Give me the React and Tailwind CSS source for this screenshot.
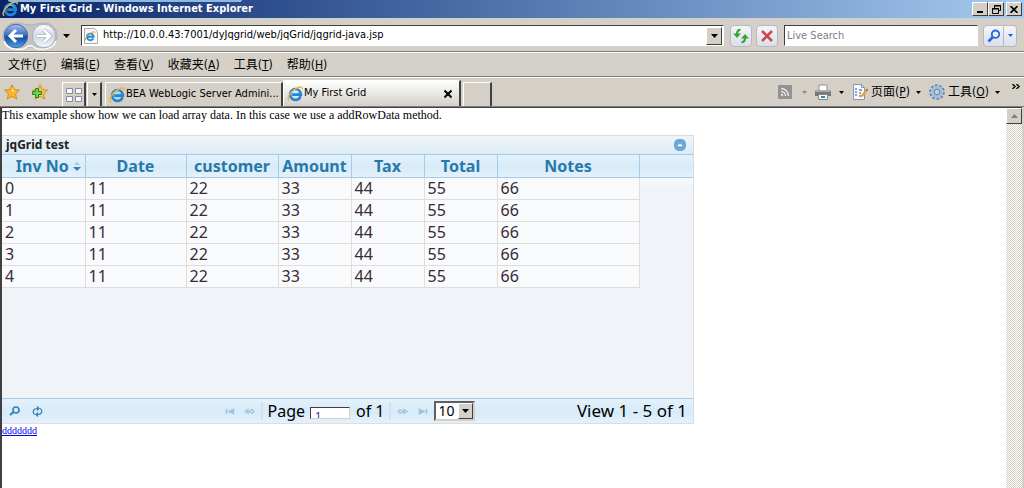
import { useState } from "react";

const columns = [
  { name: "Inv No", width: "w-[83px]", sortable: true },
  { name: "Date", width: "w-[101px]" },
  { name: "customer", width: "w-[92px]" },
  { name: "Amount", width: "w-[73px]" },
  { name: "Tax", width: "w-[73px]" },
  { name: "Total", width: "w-[73px]" },
  { name: "Notes", width: "w-[142px]" },
];

const rows = [0, 1, 2, 3, 4].map((id) => [id, 11, 22, 33, 44, 55, 66]);

const menus = [
  ["文件", "F"],
  ["编辑", "E"],
  ["查看", "V"],
  ["收藏夹", "A"],
  ["工具", "T"],
  ["帮助", "H"],
];

const raised =
  "border border-t-white border-l-white border-r-[#404040] border-b-[#404040] bg-[#d4d0c8]";

function IeLogo({ className }) {
  return (
    <svg viewBox="0 0 16 16" className={className} aria-hidden="true">
      <path
        d="M13.6 10.2a5.4 5.4 0 1 1 .2-2.6v1H5.2"
        fill="none"
        stroke="#1f86d8"
        strokeWidth="2.7"
      />
      <path d="M5 6.8a3.5 3.5 0 0 1 6.8 0" fill="none" stroke="#7fd0fa" strokeWidth="1" />
      <path
        d="M2.2 14.6C-.6 13 2.5 7 7.4 3.5 11.5.6 15.6-.2 15.3 3.2"
        fill="none"
        stroke="#f2b632"
        strokeWidth="1.4"
      />
    </svg>
  );
}

function Caret({ className = "text-black" }) {
  return (
    <svg viewBox="0 0 7 4" className={`h-1 w-[7px] shrink-0 ${className}`} aria-hidden="true">
      <path d="M0 0h7L3.5 4z" fill="currentColor" />
    </svg>
  );
}

function SmallCaret({ className = "" }) {
  return (
    <svg viewBox="0 0 5 3" className={`h-[3px] w-[5px] shrink-0 ${className}`} aria-hidden="true">
      <path d="M0 0h5L2.5 3z" fill="currentColor" />
    </svg>
  );
}

function Hotkey({ label, letter }) {
  return (
    <>
      {label}(<span className="underline">{letter}</span>)
    </>
  );
}

function TitleBar() {
  return (
    <header className="flex h-[18px] items-center justify-between bg-linear-to-r from-[#0a246a] to-[#a6caf0] px-[2px]">
      <div className="absolute top-0 left-2 h-[2px] w-[234px] rounded-b-sm bg-[#8fb8dc]" />
      <h1 className="flex items-center gap-[2px] font-['DejaVu_Sans_Condensed','DejaVu_Sans',sans-serif] text-[11px] leading-[14px] font-bold text-white">
        <IeLogo className="size-4" />
        My First Grid - Windows Internet Explorer
      </h1>
      <div className="flex">
        <button aria-label="Minimize" className={`flex h-[14px] w-4 items-end p-[2px] ${raised}`}>
          <svg viewBox="0 0 10 8" className="h-2 w-[10px]">
            <path d="M2 6h6v2H2z" />
          </svg>
        </button>
        <button aria-label="Restore" className={`grid h-[14px] w-4 place-items-center ${raised}`}>
          <svg viewBox="0 0 9 9" className="size-[9px]" fill="none" stroke="#000">
            <path d="M2.5 3V.5h6v5H7M2 1h7M.5 3.5h6v5h-6zM0 4h7" />
          </svg>
        </button>
        <button aria-label="Close" className={`ml-[2px] grid h-[14px] w-4 place-items-center ${raised}`}>
          <svg viewBox="0 0 8 7" className="h-[7px] w-2" stroke="#000" strokeWidth="1.6">
            <path d="M.5 0l7 7M7.5 0l-7 7" />
          </svg>
        </button>
      </div>
    </header>
  );
}

function NavButtons() {
  return (
    <svg viewBox="0 0 56 28" className="h-7 w-14" role="img" aria-label="Back and forward">
      <defs>
        <linearGradient id="back" x1="0" y1="0" x2="0" y2="1">
          <stop offset="0" stopColor="#a9c3ee" />
          <stop offset=".45" stopColor="#3f70c4" />
          <stop offset=".55" stopColor="#164a9e" />
          <stop offset="1" stopColor="#4fa0ee" />
        </linearGradient>
        <linearGradient id="forward" x1="0" y1="0" x2="0" y2="1">
          <stop offset="0" stopColor="#fff" />
          <stop offset=".5" stopColor="#ccd6e6" />
          <stop offset="1" stopColor="#f4f8fd" />
        </linearGradient>
      </defs>
      <path
        d="M14 .8C20 .8 22 3 28 3S36 .8 42 .8a13 13 0 0 1 0 26.4C36 27.2 34 25 28 25s-8 2.2-14 2.2A13 13 0 0 1 14 .8z"
        fill="#c4c4c4"
        stroke="#b4b2ae"
      />
      <path d="M2 19c3 10 19 10 24 5h4c6 5 20 5 24-5" fill="none" stroke="#fff" strokeWidth="1.5" />
      <circle cx="14" cy="14" r="11.7" fill="url(#back)" stroke="#4267a5" />
      <circle cx="42" cy="14" r="11.7" fill="url(#forward)" stroke="#a7adb8" />
      <path d="M21 14H9M14 8l-6 6 6 6" fill="none" stroke="#fff" strokeWidth="3" />
      <path d="M35 14h12M42 8l6 6-6 6" fill="none" stroke="#a9b1bd" strokeWidth="4" />
      <path d="M35 14h12M42 8l6 6-6 6" fill="none" stroke="#fff" strokeWidth="2.6" />
    </svg>
  );
}

function AddressBar() {
  const [url, setUrl] = useState("http://10.0.0.43:7001/dyJqgrid/web/jqGrid/jqgrid-java.jsp");
  const toolButton =
    "grid h-[22px] place-items-center rounded-sm border border-[#b5b8c0] bg-linear-to-b from-[#f5f5f8] to-[#dcdfea]";
  const field = "border border-t-[#404040] border-l-[#404040] border-r-white border-b-white bg-white";

  return (
    <div className="flex h-[34px] items-center border-b border-[#808080] pt-[2px] pr-[7px] pl-[2px]">
      <NavButtons />
      <button aria-label="Recent pages" className="ml-1 p-[1px]">
        <Caret />
      </button>
      <div className={`ml-[10px] flex h-[21px] min-w-0 flex-1 items-center pr-[1px] ${field}`}>
        <svg viewBox="0 0 16 16" className="mx-[1px] size-4 shrink-0">
          <path d="M1.5.5h10l3 3v12h-13z" fill="#f8f8f8" stroke="#aaa" />
          <path d="M10.3 10.3a3.3 3.3 0 1 1 .2-2.2v.6H4.5" fill="none" stroke="#1f86d8" strokeWidth="1.9" />
          <path d="M3 12.5c-2-1 1-5 4-7s5.5-2.5 5-.3" fill="none" stroke="#f2a622" />
        </svg>
        <input
          aria-label="Address"
          value={url}
          onChange={(e) => setUrl(e.target.value)}
          className="ml-[3px] min-w-0 flex-1 font-['DejaVu_Sans_Condensed','DejaVu_Sans',sans-serif] text-[11px] outline-none"
        />
        <button aria-label="Show addresses" className={`grid h-[18px] w-4 place-items-center ${raised}`}>
          <Caret />
        </button>
      </div>
      <button aria-label="Refresh" className={`ml-[6px] w-[22px] ${toolButton}`}>
        <svg viewBox="0 0 16 16" className="size-4" fill="none" stroke="#36a336" strokeWidth="2.2">
          <path d="M7.5 2C4.500 1.500 4 4 4 7M8.500 14c3 .5 3.500-2 3.500-5" />
          <path d="M0 5.500h8L4 10zM8 10.500h8L12 6z" fill="#36a336" stroke="none" />
        </svg>
      </button>
      <button aria-label="Stop" className={`ml-1 w-[22px] ${toolButton}`}>
        <svg viewBox="0 0 14 14" className="size-[14px]" stroke="#c84848" strokeWidth="2.5">
          <path d="M2 2l10 10M12 2L2 12" />
        </svg>
      </button>
      <input
        aria-label="Search"
        placeholder="Live Search"
        className={`ml-[6px] h-[21px] w-[194px] pl-[2px] font-['DejaVu_Sans_Condensed','DejaVu_Sans',sans-serif] text-[11px] outline-none placeholder:text-[#808080] ${field}`}
      />
      <button aria-label="Start search" className={`ml-[5px] w-[21px] rounded-r-none ${toolButton}`}>
        <svg viewBox="0 0 14 14" className="size-[14px]" fill="none" stroke="#2a66dd">
          <circle cx="8.5" cy="5.2" r="3.7" strokeWidth="1.9" fill="#e8f2ff" />
          <path d="M5.8 8L1.5 12.5" strokeWidth="2.6" />
        </svg>
      </button>
      <button aria-label="Search options" className={`w-[13px] rounded-l-none border-l-0 ${toolButton}`}>
        <SmallCaret className="text-[#0a5ef0]" />
      </button>
    </div>
  );
}

function MenuBar() {
  return (
    <nav className="flex h-[25px] items-center gap-[14px] border-t border-b border-t-white border-b-[#808080] pl-2 text-[12px]">
      {menus.map(([label, letter]) => (
        <button key={letter}>
          <Hotkey label={label} letter={letter} />
        </button>
      ))}
    </nav>
  );
}

const starPath = "M8 .8l2.2 4.8 5.2.6-3.8 3.6 1 5.2L8 12.4 3.4 15l1-5.2L.6 6.2l5.2-.6z";

function TabBar() {
  const tab = "flex items-center border-t border-l border-r-2 border-t-white border-l-white border-r-[#404040]";

  return (
    <div className="flex h-[30px] items-end justify-between border-t border-b border-t-white border-b-[#808080] pl-1">
      <div className="flex min-w-0 items-end">
        <button aria-label="Favorites" className="mb-[6px]">
          <svg viewBox="0 0 16 16" className="size-4">
            <path d={starPath} fill="#fbb52c" stroke="#d98c12" />
            <path d="M8 3l1.5 3.5L12 7 8 8z" fill="#ffe38a" />
          </svg>
        </button>
        <button aria-label="Add to favorites" className="mb-[6px] ml-3">
          <svg viewBox="0 0 16 16" className="size-4">
            <path d={starPath} fill="#fbc447" stroke="#d98c12" />
            <path d="M3.5 4.5h3v3h3v3h-3v3h-3v-3h-3v-3h3z" fill="#6fd052" stroke="#238a22" />
          </svg>
        </button>
        <button aria-label="Quick tabs" className={`ml-[14px] h-6 w-6 justify-center ${tab}`}>
          <svg viewBox="0 0 16 14" className="h-[14px] w-4 shrink-0" fill="#f7f8fc" stroke="#858ca5">
            <path d="M.5.5h6v5h-6zM9.5.5h6v5h-6zM.5 8.5h6v5h-6zM9.5 8.5h6v5h-6z" />
          </svg>
        </button>
        <button aria-label="Tab list" className={`ml-[1px] h-6 w-[15px] justify-center ${tab}`}>
          <SmallCaret />
        </button>
        <button className={`ml-[3px] h-6 w-[178px] gap-[1px] pl-[3px] ${tab}`}>
          <IeLogo className="size-4 shrink-0" />
          <span className="truncate">BEA WebLogic Server Admini...</span>
        </button>
        <div className={`h-[26px] w-[178px] gap-[1px] bg-linear-to-b from-white to-[#d4d0c8] pl-[3px] ${tab}`}>
          <IeLogo className="size-4 shrink-0" />
          <span className="flex-1">My First Grid</span>
          <button aria-label="Close tab" className="mr-[7px]">
            <svg viewBox="0 0 8 8" className="size-2" stroke="#000" strokeWidth="2">
              <path d="M.5.5l7 7M7.5.5l-7 7" />
            </svg>
          </button>
        </div>
        <button aria-label="New tab" className={`ml-[2px] h-6 w-[29px] ${tab}`} />
      </div>

      <div className="flex h-full items-center pr-1 text-[12px]">
        <button aria-label="Feeds" className="flex items-center gap-[10px]">
          <svg viewBox="0 0 14 14" className="size-[14px]">
            <rect width="14" height="14" rx="1" fill="#929292" />
            <path d="M3 6.500a4.500 4.500 0 0 1 4.500 4.500M3 3.500a7.500 7.500 0 0 1 7.500 7.500" fill="none" stroke="#e4e4e4" strokeWidth="1.5" />
            <circle cx="4" cy="10" r="1.2" fill="#e4e4e4" />
          </svg>
          <SmallCaret className="text-[#8b8984]" />
        </button>
        <button aria-label="Print" className="ml-2 flex items-center gap-2">
          <svg viewBox="0 0 16 16" className="size-4">
            <path d="M4 1h8v6H4z" fill="#fff" stroke="#8a92a0" />
            <path d="M1 6h14l1 2v4H0V8z" fill="#777" />
            <path d="M1 6h14v2H1z" fill="#a9a9a9" />
            <path d="M3.5 10.5h9v5h-9z" fill="#f4f7fb" stroke="#888" />
            <path d="M6 12h4v2H6z" fill="#2c8fb5" />
          </svg>
          <SmallCaret />
        </button>
        <button className="ml-2 flex items-center">
          <svg viewBox="0 0 16 16" className="mr-[3px] size-4">
            <path d="M1.5.5h8l3 3v12h-11z" fill="#f8faff" stroke="#8996b0" />
            <path d="M9.5.5v3h3" fill="none" stroke="#8996b0" />
            <path d="M3 5h2M3 8h2M3 11h2M7 6h3M7 9h2M7 12h2" stroke="#7385aa" strokeWidth="1.5" />
            <path d="M14.5 6.5l-5 6" stroke="#e6a42d" strokeWidth="2.3" />
            <path d="M15.5 5.3l-1 1.2" stroke="#cf4a4a" strokeWidth="2.3" />
          </svg>
          <Hotkey label="页面" letter="P" />
          <SmallCaret className="ml-[6px]" />
        </button>
        <button className="ml-2 flex items-center">
          <svg viewBox="0 0 16 16" className="mr-[3px] size-4" fill="none">
            <circle cx="8" cy="8" r="6.7" stroke="#5e84aa" strokeWidth="2.2" strokeDasharray="2.6 1.6" />
            <circle cx="8" cy="8" r="4.6" stroke="#9fc0df" strokeWidth="3.2" />
            <circle cx="8" cy="8" r="2.8" stroke="#5e84aa" />
          </svg>
          <Hotkey label="工具" letter="O" />
          <SmallCaret className="ml-[6px]" />
        </button>
        <button aria-label="More" className="mt-[6px] ml-3 self-start">
          <svg viewBox="0 0 8 5" className="h-[5px] w-2" fill="none" stroke="#000" strokeWidth="1.4">
            <path d="M.5 0L3 2.5.5 5M4.5 0L7 2.5 4.5 5" />
          </svg>
        </button>
      </div>
    </div>
  );
}

function PagerIcon({ label, flip, children }) {
  return (
    <button aria-label={label} disabled>
      <svg viewBox="0 0 11 7" className={`h-[7px] w-[11px] ${flip ? "-scale-x-100" : ""}`} fill="none" stroke="#9fc3de">
        {children}
      </svg>
    </button>
  );
}

const firstIcon = <path d="M1.5 1v5M4 3.5L8.5 1.500v4zM6 3.500h2" strokeWidth="1.5" />;
const prevIcon = <path d="M1 3.5L4 1.500v4zM5 3.500l3-2 2 2-2 2z" strokeWidth="1.2" />;

function Pager() {
  return (
    <div className="flex h-[25px] items-center border-t border-[#a6cbe8] bg-linear-to-b from-[#e4f1fb] via-[#d7ebf9] to-[#e4f1fb] pr-[6px] pl-[7px] text-black">
      <div className="flex flex-1 items-center gap-3">
        <button aria-label="Find records">
          <svg viewBox="0 0 11 10" className="h-[10px] w-[11px]" fill="none" stroke="#3580b5">
            <circle cx="7" cy="4" r="3" strokeWidth="1.6" />
            <path d="M4.5 6L1 9" strokeWidth="2.2" />
          </svg>
        </button>
        <button aria-label="Reload grid">
          <svg viewBox="0 0 11 11" className="size-[11px]" fill="none" stroke="#3580b5" strokeWidth="1.2">
            <path d="M3 8.5C0 7 1 2.5 5 2.5h2M5 .5l2 2-2 2M8 2.5c3 1.5 2 6-2 6H4M6 6.5l-2 2 2 2" />
          </svg>
        </button>
      </div>
      <div className="flex items-center pl-1">
        <div className="flex gap-2">
          <PagerIcon label="First page">{firstIcon}</PagerIcon>
          <PagerIcon label="Previous page">{prevIcon}</PagerIcon>
        </div>
        <label className="ml-[6px] flex items-center border-l-2 border-[#d3e2ee] pl-1 leading-[18px]">
          Page
          <input
            defaultValue="1"
            className="mt-1 ml-[5px] h-3 w-10 border border-t-[#404040] border-l-[#404040] border-r-[#d4d0c8] border-b-[#d4d0c8] bg-white pt-[5px] pl-1 text-[11px] leading-[11px] text-[#3a1a8c] outline-none"
          />
        </label>
        <span className="ml-[6px] border-r-2 border-[#d3e2ee] pr-1 leading-[18px]">of 1</span>
        <div className="ml-[6px] flex gap-[9px]">
          <PagerIcon label="Next page" flip>{prevIcon}</PagerIcon>
          <PagerIcon label="Last page" flip>{firstIcon}</PagerIcon>
        </div>
        <div className="relative ml-[6px]">
          <select
            aria-label="Rows per page"
            className="block h-5 w-[41px] appearance-none border-2 border-t-[#606060] border-l-[#606060] border-r-[#d4d0c8] border-b-[#d4d0c8] bg-white pl-[3px] text-[14px] leading-4 outline-none"
          >
            <option>10</option>
            <option>20</option>
            <option>30</option>
          </select>
          <span className={`pointer-events-none absolute top-[2px] right-[2px] grid h-4 w-[15px] place-items-center ${raised}`}>
            <Caret />
          </span>
        </div>
      </div>
      <div className="flex-1 text-right text-[17px] leading-[18px]">View 1 - 5 of 1</div>
    </div>
  );
}

function Grid() {
  const [open, setOpen] = useState(true);

  return (
    <section className="w-[692px] max-w-full border border-l-0 border-[#dddddd] bg-[#f0f4f8] font-['Noto_Sans','Open_Sans',sans-serif] text-[16px]">
      <div className="flex h-[18px] items-center justify-between bg-linear-to-b from-[#eef5fb] to-[#dcebf6] pr-[7px] pl-1">
        <h2 className="text-[12px] leading-4 font-bold text-[#222222]">jqGrid test</h2>
        <button aria-label="Toggle grid" onClick={() => setOpen(!open)}>
          <svg viewBox="0 0 12 12" className="size-3">
            <rect width="12" height="12" rx="5" fill="#6da8d5" />
            <path d="M3 7.2L6 4.5l3 2.7z" fill="#fff" />
          </svg>
        </button>
      </div>
      {open && (
        <>
          <div className="h-[244px] bg-[linear-gradient(#f8f9fb,#f0f4f8_12px)] bg-[position:0_24px] bg-no-repeat">
            <table className="w-full table-fixed border-collapse">
              <thead>
                <tr className="h-[23px] border-y border-[#a6cbe8] bg-linear-to-b from-[#e4f1fb] via-[#d7ebf9] to-[#e4f1fb]">
                  {columns.map((col) => (
                    <th
                      key={col.name}
                      className={`border-r border-[#a6cbe8] p-0 leading-[22px] font-bold whitespace-nowrap text-[#2779aa] ${col.width}`}
                    >
                      {col.sortable ? (
                        <button className="inline-flex items-center gap-1 pl-[10px]">
                          {col.name}
                          <svg viewBox="0 0 8 10" className="h-[10px] w-2">
                            <path d="M1 4l3-3 3 3z" fill="#a5c6de" />
                            <path d="M0 6h8L4 10z" fill="#3580b5" />
                          </svg>
                        </button>
                      ) : (
                        col.name
                      )}
                    </th>
                  ))}
                  <td />
                </tr>
              </thead>
              <tbody>
                {rows.map((row) => (
                  <tr key={row[0]} className="h-[22px]">
                    {row.map((cell, i) => (
                      <td
                        key={i}
                        className="border-r border-b border-[#dddddd] bg-[#f9fafc] py-0 pr-0 pl-[3px] leading-[21px] text-[#362b36]"
                      >
                        {cell}
                      </td>
                    ))}
                  </tr>
                ))}
              </tbody>
            </table>
          </div>
          <Pager />
        </>
      )}
    </section>
  );
}

function ScrollBar() {
  return (
    <div className="w-4 shrink-0 bg-[repeating-conic-gradient(#ffffff_0_25%,#d4d0c8_0_50%)] bg-[length:2px_2px]">
      <button aria-label="Scroll up" className={`grid h-4 w-4 place-items-center ${raised}`}>
        <Caret className="rotate-180 text-[#808080]" />
      </button>
    </div>
  );
}

export default function App() {
  return (
    <div className="flex min-h-screen flex-col bg-[#d4d0c8] font-['DejaVu_Sans_Condensed','Noto_Sans_CJK_SC',sans-serif] text-[11px] text-black">
      <TitleBar />
      <AddressBar />
      <MenuBar />
      <TabBar />
      <div className="mr-[2px] flex flex-1 border-t border-l-2 border-[#404040] bg-white">
        <main className="min-w-0 flex-1 font-['Liberation_Serif',serif]">
          <p className="mb-3 text-[12px] leading-[15px]">
            This example show how we can load array data. In this case we use a addRowData method.
          </p>
          <Grid />
          <a href="#" className="block w-fit text-[10px] leading-[14px] text-[#0000ee] underline">
            ddddddd
          </a>
        </main>
        <ScrollBar />
      </div>
    </div>
  );
}
